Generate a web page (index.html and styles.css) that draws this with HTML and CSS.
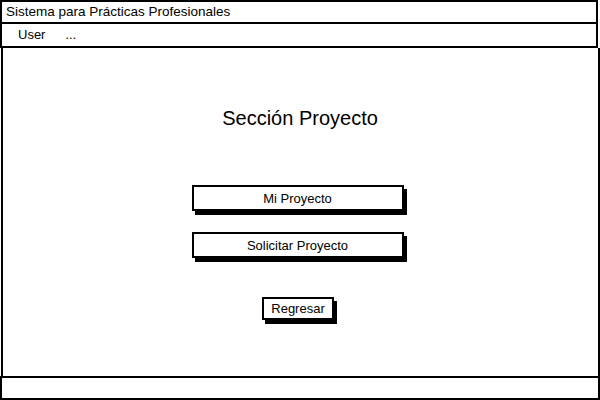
FILE: index.html
```html
<!DOCTYPE html>
<html lang="es">
<head>
<meta charset="utf-8">
<title>Sistema para Prácticas Profesionales</title>
<link rel="stylesheet" href="styles.css">
</head>
<body>
<div class="window">
  <div class="titlebar">Sistema para Prácticas Profesionales</div>
  <div class="menubar"><span class="menu-item">User</span><span class="menu-item">...</span></div>
  <main class="content">
    <h1 class="heading">Sección Proyecto</h1>
    <button class="btn btn-wide btn-first">Mi Proyecto</button>
    <button class="btn btn-wide btn-second">Solicitar Proyecto</button>
    <button class="btn btn-small">Regresar</button>
  </main>
  <div class="footer"></div>
</div>
</body>
</html>
```
FILE: styles.css
```css
* { box-sizing: border-box; }
html, body { margin: 0; padding: 0; background: #fff; }
body {
  width: 600px;
  height: 400px;
  overflow: hidden;
  font-family: "Liberation Sans", Arial, sans-serif;
  color: #000;
}
.window {
  display: flex;
  flex-direction: column;
  width: 600px;
  height: 400px;
}
.titlebar {
  width: 598px;
  height: 24px;
  border: 2px solid #000;
  font-size: 13.5px;
  line-height: 20px;
  padding-left: 4px;
}
.menubar {
  width: 598px;
  height: 24px;
  border: 2px solid #000;
  border-top: none;
  display: flex;
  gap: 20px;
  padding-left: 16px;
  font-size: 13px;
  line-height: 22px;
}
.content {
  flex: 1;
  border-left: 2px solid #000;
  border-right: 2px solid #000;
  margin-left: 1px;
  display: flex;
  flex-direction: column;
  align-items: center;
  padding-top: 58px;
}
.heading {
  margin: 0;
  font-size: 20px;
  font-weight: normal;
  line-height: 24px;
  padding-right: 1px;
}
.btn {
  font-family: "Liberation Sans", Arial, sans-serif;
  font-size: 13px;
  color: #000;
  background: #fff;
  border: 2px solid #000;
  box-shadow: 3px 4px 0 #000;
  padding: 0;
  border-radius: 0;
}
.btn-wide {
  width: 212px;
  height: 26px;
  margin-left: -6px;
}
.btn-first { margin-top: 55px; }
.btn-second { margin-top: 21px; }
.btn-small {
  width: 72px;
  height: 23px;
  margin-top: 39px;
  margin-left: -5px;
}
.footer {
  height: 24px;
  border: 2px solid #000;
}
```
